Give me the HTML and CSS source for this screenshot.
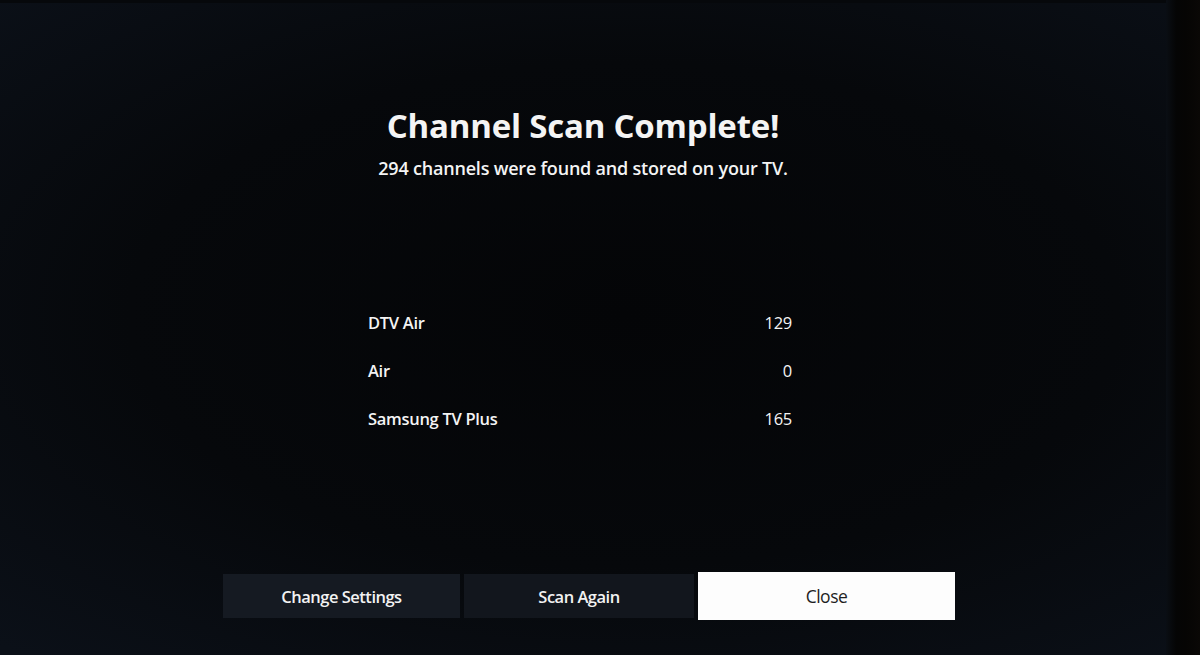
FILE: index.html
```html
<!DOCTYPE html>
<html lang="en">
<head>
    <meta charset="UTF-8">
    <meta name="viewport" content="width=device-width, initial-scale=1.0">
    <title>Channel Scan Complete</title>
    <link rel="stylesheet" href="styles.css">
</head>
<body>

    <div class="screen">
        <!-- Result header -->
        <div class="header">
            <h1>Channel Scan Complete!</h1>
            <p>294 channels were found and stored on your TV.</p>
        </div>

        <!-- Channel counts -->
        <div class="list">
            <div class="row"><span>DTV Air</span><span class="count">129</span></div>
            <div class="row"><span>Air</span><span class="count">0</span></div>
            <div class="row"><span>Samsung TV Plus</span><span class="count">165</span></div>
        </div>

        <!-- Bottom buttons -->
        <div class="actions">
            <button class="btn btn-settings">Change Settings</button>
            <button class="btn btn-scan">Scan Again</button>
            <button class="btn btn-close focused">Close</button>
        </div>
    </div>

    <div class="bezel"></div>

</body>
</html>
```

FILE: styles.css
```css
body {
    margin: 0;
    height: 655px;
    display: flex;
    overflow: hidden;
    font-family: "Open Sans", "Noto Sans", sans-serif;
    color: #f4f4f4;
    background: radial-gradient(ellipse 75% 70% at 52% 48%, #040507 0%, #06080b 55%, #0b1018 100%);
}
.screen {
    flex: 1;
    display: flex;
    flex-direction: column;
    align-items: center;
    border-top: 3px solid #06080b;
}
.header {
    padding-top: 103px;
    text-align: center;
}
.header h1 {
    margin: 0;
    font-size: 33px;
    line-height: 40px;
    font-weight: 700;
    letter-spacing: -0.2px;
}
.header p {
    margin: 10px 0 0;
    font-size: 18px;
    line-height: 24px;
    font-weight: 600;
    letter-spacing: -0.2px;
}
.list {
    width: 424px;
    margin-top: 119px;
    margin-right: 6px;
}
.row {
    display: flex;
    justify-content: space-between;
    height: 48px;
    line-height: 48px;
    font-size: 16.5px;
    font-weight: 600;
    letter-spacing: -0.3px;
}
.row .count {
    font-weight: 500;
}
.actions {
    margin-top: auto;
    padding: 0 0 35px 12px;
    display: flex;
    align-items: center;
    gap: 4px;
}
.btn {
    height: 44px;
    border: none;
    background: #151a22;
    color: #f2f2f2;
    font-family: "Open Sans", "Noto Sans", sans-serif;
    font-size: 16.5px;
    font-weight: 600;
    letter-spacing: -0.5px;
    padding: 0;
}
.btn-settings {
    width: 237px;
}
.btn-scan {
    width: 230px;
    background: #12161d;
}
.btn-close {
    width: 257px;
}
.btn.focused {
    height: 48px;
    background: #fdfdfd;
    color: #1f1f1f;
    font-weight: 500;
    font-size: 17.5px;
}
.bezel {
    width: 34px;
    background: linear-gradient(to right, #0a0e14 0%, #050505 30%, #060504 60%, #0a0806 100%);
}
```
